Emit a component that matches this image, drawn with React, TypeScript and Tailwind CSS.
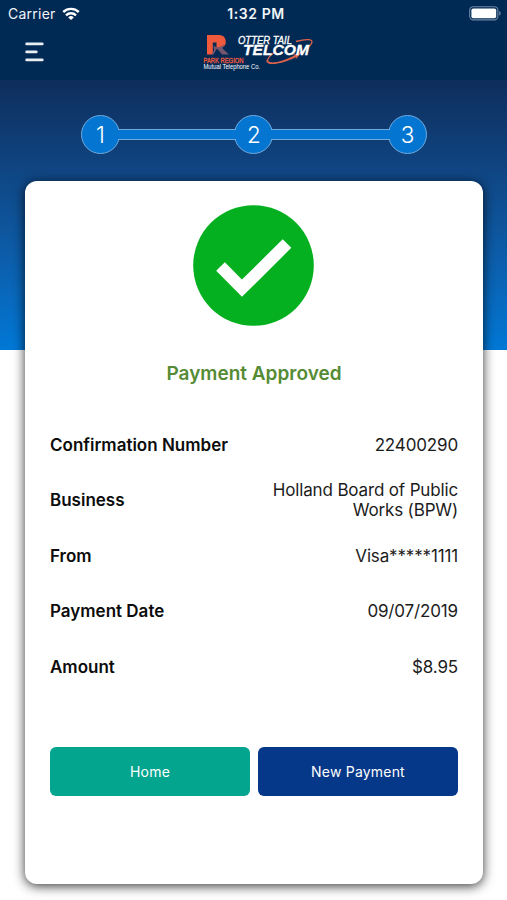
import React from 'react';

const details = [
  { label: 'Confirmation Number', value: '22400290' },
  { label: 'Business', value: 'Holland Board of Public Works (BPW)' },
  { label: 'From', value: 'Visa*****1111' },
  { label: 'Payment Date', value: '09/07/2019' },
  { label: 'Amount', value: '$8.95' },
];

const WifiIcon = () => (
  <svg width="18" height="13" viewBox="0 0 18 13" fill="none" stroke="white" strokeWidth="2.4" className="-mt-[2px]">
    <path d="M1.2 5a11.400 11.400 0 0 1 15.600 0" />
    <path d="M4 8.300a7.200 7.200 0 0 1 10 0" />
    <path d="M9 13 6.200 10.400a4 4 0 0 1 5.600 0z" fill="white" stroke="none" />
  </svg>
);

const BatteryIcon = () => (
  <svg width="32" height="15" viewBox="0 0 32 15" fill="none" className="-mt-[2px]">
    <rect x="0.7" y="0.7" width="28.2" height="13.2" rx="3.6" stroke="#6f87a3" strokeWidth="1.1" />
    <rect x="2.4" y="2.4" width="24.8" height="9.8" rx="1.8" fill="white" />
    <path d="M30.2 5v4.6c1-.4 1.5-1.300 1.500-2.300S31.200 5.400 30.200 5z" fill="#6f87a3" />
  </svg>
);

const MenuIcon = () => (
  <svg width="20" height="20" viewBox="0 0 20 20" stroke="#e9eef3" strokeWidth="2.9" strokeLinecap="round">
    <path d="M2.700 1.900h15.500M2.700 9.900h9.500M2.700 17.900h15.500" />
  </svg>
);

const Logo = () => (
  <svg width="112" height="40" viewBox="0 0 112 40" fontFamily="'Liberation Sans', Arial, sans-serif">
    <path d="M4 3h12.500a6.500 6.500 0 0 1 2 12.600l-5 1.400v-6.500H9.800V22.500H4z" fill="#f05a3c" />
    <path d="M10.500 13.500c4 3 8 1.500 10.500-1.500l-1.500 4.500 6.500 6h-7l-5-6-3.500 6h-2.500l3-4z" fill="#74566f" />
    <text x="0.500" y="31.300" fontSize="6.800" fill="#f05a3c" stroke="#f05a3c" strokeWidth="0.300" textLength="40" lengthAdjust="spacingAndGlyphs">PARK REGION</text>
    <text x="0.500" y="37" fontSize="6.600" fill="white" textLength="56.500" lengthAdjust="spacingAndGlyphs">Mutual Telephone Co.</text>
    <path d="M93 9.500c11-3 18-2.500 15.500 2C105 17.500 93 24.500 80 29c-10 3.500-17 2.500-15-2 1-2.500 4-5 8-7.500" fill="none" stroke="#e0644c" strokeWidth="1.300" />
    <path d="M64 27c-1 6.500 13 4.500 28.500-3.500l-3-.5 9-2.500-6 7 .5-2.500c-16 8.500-33 9.500-29 2z" fill="#e0644c" />
    <text x="35" y="11.500" fontSize="11" fontStyle="italic" fill="white" stroke="white" strokeWidth="0.350" textLength="54" lengthAdjust="spacingAndGlyphs">OTTER TAIL</text>
    <text x="40" y="23" fontSize="15" fontStyle="italic" fontWeight="700" fill="white" stroke="white" strokeWidth="0.300" textLength="66" lengthAdjust="spacingAndGlyphs">TELCOM</text>
  </svg>
);

const StepCircle = ({ step }: { step: number }) => (
  <div className="flex h-[39px] w-[39px] shrink-0 items-center justify-center rounded-full border border-[#70a9dc] bg-[#0476d1] pt-px pl-px text-[22.5px] font-light text-white">
    {step}
  </div>
);

const StepLine = () => (
  <div className="z-10 -mx-[2px] h-[11px] flex-1 border-y border-[#70a9dc] bg-[#0476d1]"></div>
);

export default function App() {
  return (
    <div className="h-[900px] w-[507px] overflow-hidden bg-white font-['Inter',sans-serif]">
      <header className="h-20 bg-[#002954]">
        <div className="grid h-7 grid-cols-3 items-center pl-2 pr-[6px] text-[#f2f5f8]">
          <div className="flex items-center gap-[6px] text-[14px] leading-none">
            <span className="tracking-[0.25px]">Carrier</span>
            <WifiIcon />
          </div>
          <div className="pl-[3px] text-center text-[14px] leading-none font-semibold tracking-[0.6px]">1:32 PM</div>
          <div className="flex justify-end">
            <BatteryIcon />
          </div>
        </div>
        <div className="flex h-12 items-center pl-[24px]">
          <button className="w-[179px]" aria-label="Menu">
            <MenuIcon />
          </button>
          <Logo />
        </div>
      </header>

      <section className="h-[270px] bg-linear-to-b from-[#0e2e5c] to-[#0078d6] px-[80.5px] pt-[35px]">
        <div className="flex items-center">
          <StepCircle step={1} />
          <StepLine />
          <StepCircle step={2} />
          <StepLine />
          <StepCircle step={3} />
        </div>
      </section>

      <main className="relative mr-[24px] ml-[25px] -mt-[169px] flex h-[703px] flex-col items-center rounded-[12px] bg-white px-[25px] pt-6 shadow-[0_2px_12px_rgba(0,0,0,0.8)]">
        <svg width="121" height="121" viewBox="0 0 121 121" className="mr-[2px]">
          <circle cx="60.500" cy="60.500" r="60.300" fill="#04b01f" />
          <path d="M27.500 61.500l21.500 21.700L94 38.500" fill="none" stroke="white" strokeWidth="12.200" />
        </svg>
        <h1 className="mt-[34px] text-[19px] leading-[28px] font-semibold text-[#558b34]">Payment Approved</h1>

        <dl className="mt-[29px] w-full">
          {details.map(({ label, value }) => (
            <div key={label} className="flex h-[55.5px] items-center justify-between text-[17px] leading-[20px]">
              <dt className="font-semibold text-[#0c0c0c]">{label}</dt>
              <dd className="w-[205px] text-right tracking-[-0.15px] text-[#1c1c1c]">{value}</dd>
            </div>
          ))}
        </dl>

        <div className="mt-[52.5px] grid w-full grid-cols-2 gap-2 text-[14px] tracking-[0.2px] text-white">
          <button className="h-[49px] rounded-[6px] bg-[#03a58f]">Home</button>
          <button className="h-[49px] rounded-[6px] bg-[#053888]">New Payment</button>
        </div>
      </main>
    </div>
  );
}
